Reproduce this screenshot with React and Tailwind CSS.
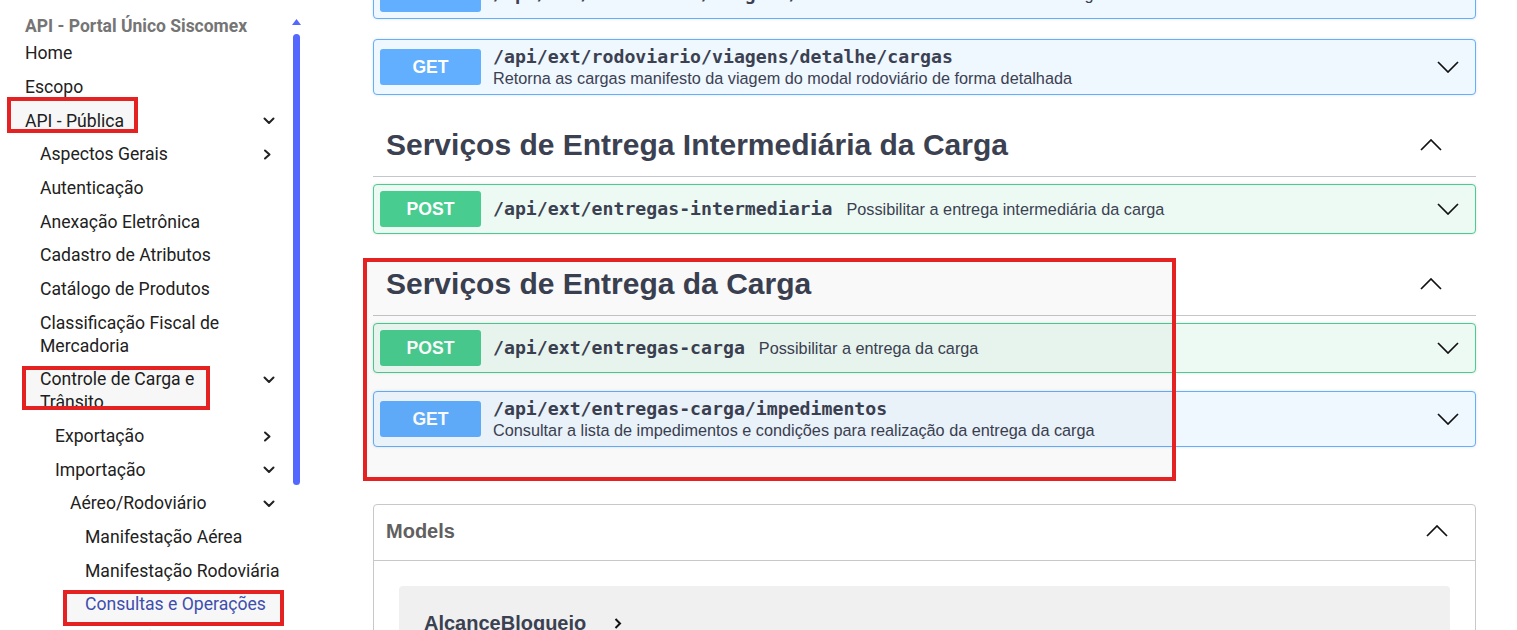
import React from 'react';

const NAV = [
  { label: 'Home', level: 0 },
  { label: 'Escopo', level: 0 },
  { label: 'API - Pública', level: 0, chevron: 'down' },
  { label: 'Aspectos Gerais', level: 1, chevron: 'right' },
  { label: 'Autenticação', level: 1 },
  { label: 'Anexação Eletrônica', level: 1 },
  { label: 'Cadastro de Atributos', level: 1 },
  { label: 'Catálogo de Produtos', level: 1 },
  { label: 'Classificação Fiscal de Mercadoria', level: 1 },
  { label: 'Controle de Carga e Trânsito', level: 1, chevron: 'down' },
  { label: 'Exportação', level: 2, chevron: 'right' },
  { label: 'Importação', level: 2, chevron: 'down' },
  { label: 'Aéreo/Rodoviário', level: 3, chevron: 'down' },
  { label: 'Manifestação Aérea', level: 4 },
  { label: 'Manifestação Rodoviária', level: 4 },
  { label: 'Consultas e Operações', level: 4, active: true },
  { label: 'Validações', level: 4 },
];

const INDENT = ['pl-0', 'pl-[15px]', 'pl-[30px]', 'pl-[45px]', 'pl-[60px]'];

function SmallChevron({ dir }) {
  if (dir === 'down') {
    return (
      <svg width="12" height="8" viewBox="0 0 12 8" fill="none" stroke="#222" strokeWidth="2" strokeLinecap="round" strokeLinejoin="round">
        <polyline points="1.5,1.5 6,6 10.5,1.5" />
      </svg>
    );
  }
  return (
    <svg width="8" height="11" viewBox="0 0 8 11" fill="none" stroke="#222" strokeWidth="2" strokeLinecap="round" strokeLinejoin="round">
      <polyline points="2,1.5 6.5,5.5 2,9.5" />
    </svg>
  );
}

function Chevron({ up = false }) {
  return (
    <svg width="22" height="12" viewBox="0 0 22 12" fill="none" stroke="#111" strokeWidth="1.7" className="shrink-0">
      <polyline points={up ? '1,11 11,1 21,11' : '1,1 11,11 21,1'} />
    </svg>
  );
}

function Sidebar() {
  return (
    <aside className="flex w-[301px] shrink-0">
      <nav className="min-w-0 flex-1 pl-[25px] pr-[6px] pt-[16px] font-['Roboto',sans-serif]">
        <div className="text-[17.5px] font-bold leading-[20px] text-[#757575]">API - Portal Único Siscomex</div>
        <ul className="mt-[1px]">
          {NAV.map((item) => (
            <li key={item.label} className={`flex items-start py-[5.34px] ${INDENT[item.level]}`}>
              <span
                className={`min-w-0 flex-1 text-[17.6px] leading-[23px] ${
                  item.active ? 'text-[#3f51b5]' : 'text-[#212121]'
                }`}
              >
                {item.label}
              </span>
              {item.chevron && (
                <span className="flex h-[23px] w-[26px] shrink-0 items-center pl-[5px]">
                  <SmallChevron dir={item.chevron} />
                </span>
              )}
            </li>
          ))}
        </ul>
      </nav>
      <div className="w-[11px] shrink-0 pl-[2px] pt-[19px]">
        <svg width="9" height="6" viewBox="0 0 9 6">
          <polygon points="4.5,0 9,6 0,6" fill="#5468ff" />
        </svg>
        <div className="ml-[1px] mt-[9px] h-[451px] w-[7px] rounded-full bg-[#5468ff]" />
      </div>
    </aside>
  );
}

const METHOD = {
  GET: { card: 'border-[#61affe] bg-[#eff7ff]', badge: 'bg-[#61affe]' },
  POST: { card: 'border-[#49cc90] bg-[#edfaf4]', badge: 'bg-[#49cc90]' },
};

function Operation({ method, path, summary }) {
  const s = METHOD[method];
  return (
    <div className={`flex items-center rounded-[4px] border p-[6px] pr-[16px] shadow-[0_0_3px_rgba(0,0,0,0.12)] ${s.card}`}>
      <span
        className={`flex h-[36px] w-[101px] shrink-0 items-center justify-center rounded-[3px] text-[17.6px] font-bold text-white ${s.badge}`}
      >
        {method}
      </span>
      <div className="ml-[12px] flex min-w-0 flex-1 flex-wrap items-center gap-x-[14px]">
        <span className="font-['DejaVu_Sans_Mono',monospace] text-[18.2px] font-bold leading-[22px] text-[#3b4151]">
          {path}
        </span>
        <span className="text-[16.25px] leading-[20px] text-[#3b4151]">{summary}</span>
      </div>
      <span className="ml-[12px]">
        <Chevron />
      </span>
    </div>
  );
}

function TagSection({ title, children }) {
  return (
    <section className="mt-[25px]">
      <div className="flex items-center justify-between border-b border-[#c4c6cb] pb-[13px] pl-[13px] pr-[34px] pt-[7px]">
        <h3 className="text-[30px] font-bold leading-[36px] text-[#3b4151]">{title}</h3>
        <Chevron up />
      </div>
      <div className="mt-[7px] flex flex-col gap-[18px]">{children}</div>
    </section>
  );
}

function Models() {
  return (
    <section className="mt-[57px] rounded-[4px] border border-[#c8c8c8]">
      <div className="flex h-[56px] items-center justify-between border-b border-[#c8c8c8] pb-[4px] pl-[12px] pr-[27px]">
        <h4 className="text-[20px] font-bold leading-[24px] text-[#606060]">Models</h4>
        <Chevron up />
      </div>
      <div className="px-[25px] pt-[25px]">
        <div className="flex items-center gap-[28px] rounded-[4px] bg-[#f0f0f0] pb-[20px] pl-[25px] pt-[25px]">
          <span className="text-[20px] font-bold leading-[24px] text-[#3b4151]">AlcanceBloqueio</span>
          <svg width="8" height="11" viewBox="0 0 8 11" fill="none" stroke="#111" strokeWidth="2">
            <polyline points="1.5,1 6,5.5 1.5,10" />
          </svg>
        </div>
      </div>
    </section>
  );
}

export default function App() {
  return (
    <div className="relative flex h-[630px] w-full overflow-hidden bg-white">
      <Sidebar />
      <main className="min-w-0 flex-1 pl-[72px] pr-[41px] font-['Liberation_Sans',Arial,sans-serif]">
        <div className="-mt-[31px] flex flex-col gap-[20px]">
          <Operation
            method="GET"
            path="/api/ext/rodoviario/viagens/detalhe"
            summary="Retorna o manifesto da viagem do modal rodoviário de forma detalhada"
          />
          <Operation
            method="GET"
            path="/api/ext/rodoviario/viagens/detalhe/cargas"
            summary="Retorna as cargas manifesto da viagem do modal rodoviário de forma detalhada"
          />
        </div>
        <TagSection title="Serviços de Entrega Intermediária da Carga">
          <Operation
            method="POST"
            path="/api/ext/entregas-intermediaria"
            summary="Possibilitar a entrega intermediária da carga"
          />
        </TagSection>
        <TagSection title="Serviços de Entrega da Carga">
          <Operation method="POST" path="/api/ext/entregas-carga" summary="Possibilitar a entrega da carga" />
          <Operation
            method="GET"
            path="/api/ext/entregas-carga/impedimentos"
            summary="Consultar a lista de impedimentos e condições para realização da entrega da carga"
          />
        </TagSection>
        <Models />
      </main>

      {/* highlight frames drawn over the page */}
      <div className="pointer-events-none absolute left-[7px] top-[97px] h-[36px] w-[131px] border-4 border-[#e42222] bg-black/[0.03]" />
      <div className="pointer-events-none absolute left-[22px] top-[366px] h-[44px] w-[188px] border-4 border-[#e42222] bg-black/[0.03]" />
      <div className="pointer-events-none absolute left-[63px] top-[590px] h-[36px] w-[221px] border-4 border-[#e42222] bg-black/[0.03]" />
      <div className="pointer-events-none absolute left-[363px] top-[258px] h-[223px] w-[813px] border-4 border-[#e42222] bg-black/[0.025]" />
    </div>
  );
}
